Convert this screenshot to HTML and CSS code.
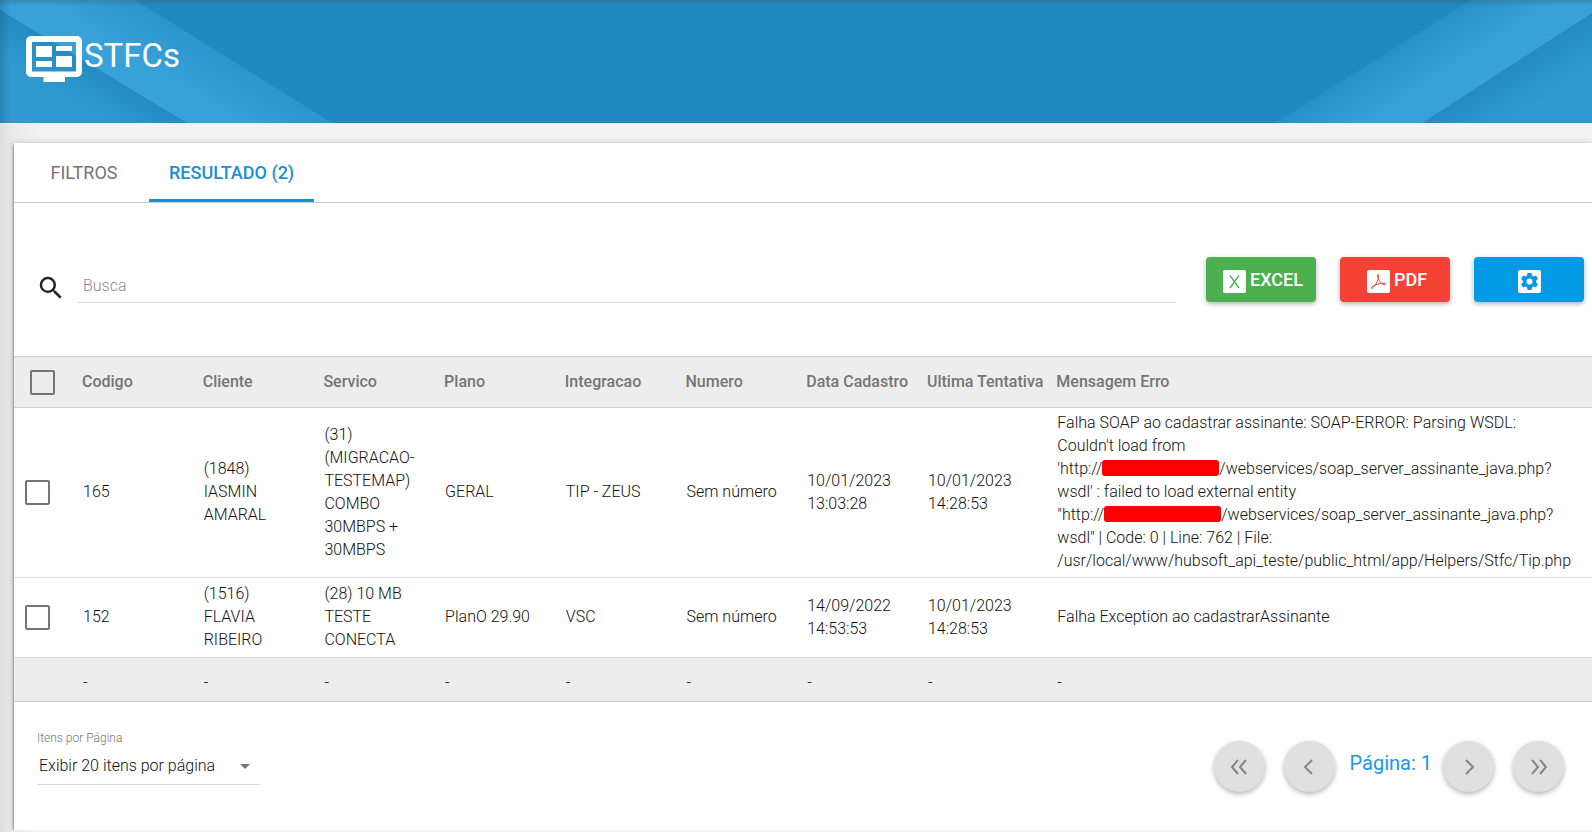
FILE: index.html
```html
<!DOCTYPE html>
<html lang="pt-BR">
<head>
  <meta charset="UTF-8" />
  <meta name="viewport" content="width=device-width, initial-scale=1.0"/>
  <title>STFCs</title>
  <link rel="stylesheet" href="styles.css">
</head>
<body>
  <header class="page-header">
    <svg class="stripes stripes-left" viewBox="0 0 340 123" aria-hidden="true">
      <defs>
        <linearGradient id="bandL" gradientUnits="userSpaceOnUse" x1="236" y1="62" x2="184" y2="145">
          <stop offset="0" stop-color="#2b94ca"/>
          <stop offset="0.5" stop-color="#38a1d7"/>
        </linearGradient>
        <linearGradient id="cornerL" gradientUnits="userSpaceOnUse" x1="93" y1="66" x2="63" y2="116">
          <stop offset="0" stop-color="#238bc1"/>
          <stop offset="0.7" stop-color="#309ad0"/>
        </linearGradient>
      </defs>
      <path fill="url(#bandL)" d="M0 0H135L332 123H0z"/>
      <path fill="url(#cornerL)" d="M0 10L187 123H0z"/>
    </svg>
    <svg class="stripes stripes-right" viewBox="0 0 340 123" aria-hidden="true">
      <defs>
        <linearGradient id="bandR" gradientUnits="userSpaceOnUse" x1="120" y1="62" x2="152" y2="112">
          <stop offset="0" stop-color="#2790c6"/>
          <stop offset="0.8" stop-color="#38a1d7"/>
        </linearGradient>
        <linearGradient id="cornerR" gradientUnits="userSpaceOnUse" x1="255" y1="68" x2="285" y2="115">
          <stop offset="0" stop-color="#238bc1"/>
          <stop offset="0.8" stop-color="#309ad0"/>
        </linearGradient>
      </defs>
      <path fill="url(#bandR)" d="M219 0H340V123H23z"/>
      <path fill="url(#cornerR)" d="M340 13V123H170z"/>
    </svg>
    <div class="brand">
      <svg class="brand-icon" viewBox="0 0 56 46" aria-hidden="true">
        <path fill="#fff" fill-rule="evenodd" d="M5 0H51a5 5 0 0 1 5 5V36a5 5 0 0 1-5 5H39V46H17.500V41H5a5 5 0 0 1-5-5V5a5 5 0 0 1 5-5zM6 6V35.500H50V6z"/>
        <path fill="#fff" d="M10 10H26V21H10zM30 10H46V15H30zM10 25H26V31H10zM30 20H46V31H30z"/>
      </svg>
      <h1>STFCs</h1>
    </div>
  </header>

  <main class="card">
    <nav class="tabs">
      <button class="tab" type="button">FILTROS</button>
      <button class="tab active" type="button">RESULTADO (2)</button>
    </nav>

    <div class="toolbar">
      <label class="search-label" for="busca" aria-label="Busca">
        <svg width="30" height="30" viewBox="0 0 24 24" aria-hidden="true">
          <path fill="#212121" d="M15.500 14h-.79l-.28-.27A6.471 6.471 0 0 0 16 9.500 6.500 6.500 0 1 0 9.500 16c1.610 0 3.090-.59 4.230-1.570l.27.280v.790l5 4.990L20.490 19l-4.990-5zm-6 0C7.010 14 5 11.990 5 9.500S7.010 5 9.500 5 14 7.010 14 9.500 11.990 14 9.500 14z"/>
        </svg>
      </label>
      <input class="search" type="text" id="busca" placeholder="Busca">
      <div class="actions">
        <button class="btn green" type="button">
          <svg width="23" height="23" viewBox="0 0 23 23" aria-hidden="true">
            <rect width="23" height="23" rx="2" fill="#fff"/>
            <path d="M7 5.500L16 18M16 5.500L7 18" stroke="#4caf50" stroke-width="1.300" fill="none"/>
          </svg>
          <span>EXCEL</span>
        </button>
        <button class="btn red" type="button">
          <svg width="23" height="23" viewBox="0 0 23 23" aria-hidden="true">
            <rect width="23" height="23" rx="2" fill="#fff"/>
            <path d="M10.500 5.500C10 3.800 12 3.800 11.700 5.800C11.500 10.500 7.500 17 5.500 18.200C4.500 18.700 3.700 18 4.800 17C7 14.800 13 12.800 17 13.200C19.500 13.500 19 15.200 17.200 14.700C14 13.800 11 10 10.500 5.500z" stroke="#f44336" stroke-width="1" fill="none"/>
          </svg>
          <span>PDF</span>
        </button>
        <button class="btn blue" type="button" aria-label="Configurações">
          <svg width="23" height="23" viewBox="0 0 23 23" aria-hidden="true">
            <rect width="23" height="23" rx="2" fill="#fff"/>
            <path fill="#039be5" fill-rule="evenodd" d="M9.500 3h4l.5 2.600 1.500.9 2.500-.9 2 3.400-2 1.700v1.700l2 1.700-2 3.400-2.500-.9-1.500.9-.5 2.500h-4L9 17.500l-1.500-.9-2.500.9-2-3.400 2-1.700v-1.700L3 9l2-3.400 2.500.9L9 5.600zM11.500 8.500a3 3 0 1 0 0 6 3 3 0 0 0 0-6z"/>
          </svg>
        </button>
      </div>
    </div>

    <table class="results">
      <colgroup>
        <col class="col-check">
        <col class="col-data" span="7">
        <col class="col-last-try">
        <col>
      </colgroup>
      <thead>
        <tr>
          <th class="check"><input type="checkbox" aria-label="Selecionar todos"></th>
          <th>Codigo</th>
          <th>Cliente</th>
          <th>Servico</th>
          <th>Plano</th>
          <th>Integracao</th>
          <th>Numero</th>
          <th>Data Cadastro</th>
          <th>Ultima Tentativa</th>
          <th>Mensagem Erro</th>
        </tr>
      </thead>
      <tbody>
        <tr>
          <td class="check"><input type="checkbox" aria-label="Selecionar 165"></td>
          <td>165</td>
          <td>(1848) IASMIN AMARAL</td>
          <td>(31) (MIGRACAO-TESTEMAP) COMBO 30MBPS + 30MBPS</td>
          <td>GERAL</td>
          <td>TIP - ZEUS</td>
          <td>Sem número</td>
          <td>10/01/2023 13:03:28</td>
          <td>10/01/2023 14:28:53</td>
          <td class="message">
            Falha SOAP ao cadastrar assinante: SOAP-ERROR: Parsing WSDL:<br>
            Couldn't load from<br>
            'http://<span class="redacted"></span>/webservices/soap_server_assinante_java.php?<br>
            wsdl' : failed to load external entity<br>
            "http://<span class="redacted"></span>/webservices/soap_server_assinante_java.php?<br>
            wsdl" | Code: 0 | Line: 762 | File:<br>
            /usr/local/www/hubsoft_api_teste/public_html/app/Helpers/Stfc/Tip.php
          </td>
        </tr>
        <tr>
          <td class="check"><input type="checkbox" aria-label="Selecionar 152"></td>
          <td>152</td>
          <td>(1516) FLAVIA RIBEIRO</td>
          <td>(28) 10 MB TESTE CONECTA</td>
          <td>PlanO 29.90</td>
          <td>VSC</td>
          <td>Sem número</td>
          <td>14/09/2022 14:53:53</td>
          <td>10/01/2023 14:28:53</td>
          <td class="message">Falha Exception ao cadastrarAssinante</td>
        </tr>
      </tbody>
      <tfoot>
        <tr>
          <td></td>
          <td>-</td>
          <td>-</td>
          <td>-</td>
          <td>-</td>
          <td>-</td>
          <td>-</td>
          <td>-</td>
          <td>-</td>
          <td>-</td>
        </tr>
      </tfoot>
    </table>

    <div class="footer">
      <div class="per-page">
        <label for="itens">Itens por Página</label>
        <div class="select-wrap">
          <select id="itens">
            <option>Exibir 20 itens por página</option>
          </select>
        </div>
      </div>
      <div class="pagination">
        <button class="page-btn" type="button" aria-label="Primeira página">
          <svg width="30" height="30" viewBox="0 0 30 30"><path d="M14 8L8 15L14 22M22 8L16 15L22 22"/></svg>
        </button>
        <button class="page-btn" type="button" aria-label="Página anterior">
          <svg width="30" height="30" viewBox="0 0 30 30"><path d="M18 8L11 15L18 22"/></svg>
        </button>
        <span class="page-label">Página: 1</span>
        <button class="page-btn" type="button" aria-label="Próxima página">
          <svg width="30" height="30" viewBox="0 0 30 30"><path d="M12 8L19 15L12 22"/></svg>
        </button>
        <button class="page-btn" type="button" aria-label="Última página">
          <svg width="30" height="30" viewBox="0 0 30 30"><path d="M8 8L14 15L8 22M16 8L22 15L16 22"/></svg>
        </button>
      </div>
    </div>
  </main>
</body>
</html>
```
FILE: styles.css
```css
* {
  box-sizing: border-box;
}
body {
  margin: 0;
  font-family: Roboto, "Liberation Sans", sans-serif;
  font-size: 16px;
  font-weight: 300;
  line-height: 23px;
  color: #111;
  background: linear-gradient(to right, #dfdfdf, #ebebeb 14px, #f3f3f3 40px);
  overflow-x: hidden;
}
button,
input,
select {
  font-family: inherit;
}

/* header */
.page-header {
  position: relative;
  height: 123px;
  padding: 36px 26px;
  background: #2089bf;
}
.page-header::after {
  content: "";
  position: absolute;
  inset: 0;
  background:
    linear-gradient(to bottom, rgba(60, 80, 100, 0.3), transparent 6px),
    linear-gradient(to right, rgba(20, 80, 120, 0.3), transparent 10px);
}
.stripes {
  position: absolute;
  top: 0;
  width: 340px;
  height: 123px;
}
.stripes-left {
  left: 0;
}
.stripes-right {
  right: 0;
}
.brand {
  position: relative;
  display: flex;
  gap: 2px;
}
.brand-icon {
  width: 56px;
  height: 46px;
}
h1 {
  margin: 0;
  color: #fff;
  font-size: 33px;
  font-weight: 400;
  line-height: 40px;
}

/* card */
.card {
  margin: 20px 0 0 14px;
  background: #fff;
  box-shadow: 0 2px 3px rgba(0, 0, 0, 0.6), 0 0 8px rgba(0, 0, 0, 0.15);
}
.tabs {
  display: flex;
  height: 60px;
  padding-left: 5px;
  border-bottom: 1px solid #ccc;
}
.tab {
  min-width: 130px;
  padding: 2px 20px 0;
  border: 0;
  border-bottom: 3px solid transparent;
  background: none;
  color: #757575;
  font-size: 18px;
  font-weight: 400;
}
.tab.active {
  border-bottom-color: #1b8fd6;
  color: #1b8fd6;
  font-weight: 500;
}

/* search and export buttons */
.toolbar {
  display: flex;
  align-items: center;
  height: 153px;
  padding: 0 8px 0 22px;
}
.search-label {
  display: flex;
  padding-top: 16px;
  margin-right: 12px;
}
.search {
  flex: 1;
  height: 40px;
  margin-top: 6px;
  padding: 6px 5px 0;
  border: 0;
  border-bottom: 1px solid #d8d8d8;
  background: none;
  font-size: 16px;
  font-weight: 300;
}
.search::placeholder {
  color: #8a8a8a;
}
.actions {
  display: flex;
  gap: 24px;
  margin-left: 30px;
}
.btn {
  display: flex;
  align-items: center;
  justify-content: center;
  gap: 4px;
  width: 110px;
  height: 45px;
  padding: 0;
  border: 0;
  border-radius: 4px;
  color: #fff;
  font-size: 18px;
  font-weight: 500;
  box-shadow: 0 2px 5px rgba(0, 0, 0, 0.3);
}
.btn svg {
  margin-top: 4px;
}
.green,
.red {
  padding-left: 4px;
}
.green {
  background: #4caf50;
}
.red {
  background: #f44336;
}
.blue {
  background: #039be5;
}

/* table */
.results {
  width: 100%;
  table-layout: fixed;
  border-collapse: collapse;
}
.col-check {
  width: 62px;
}
.col-data {
  width: 7.65%;
}
.col-last-try {
  width: 8.2%;
}
th,
td {
  padding: 3px 16px 5px 7px;
  text-align: left;
  vertical-align: middle;
}
th {
  height: 51px;
  padding-left: 6px;
  border: 1px solid #d0d0d0;
  border-width: 1px 0;
  background: #ededed;
  color: #757575;
  font-weight: 500;
  white-space: nowrap;
}
td {
  height: 80px;
  border-bottom: 1px solid #dcdcdc;
}
tfoot td {
  height: 44px;
  padding-top: 7px;
  padding-bottom: 1px;
  background: #ededed;
  border-bottom-color: #ccc;
}
.check {
  padding: 0 0 0 11px;
}
th.check {
  padding-left: 16px;
}
.check input {
  display: block;
  appearance: none;
  width: 25px;
  height: 25px;
  margin: 0;
  border: 2px solid #757575;
  border-radius: 2px;
}
.message {
  white-space: nowrap;
}
.redacted {
  display: inline-block;
  width: 117px;
  height: 16px;
  border-radius: 3px;
  background: #f00;
  vertical-align: -2px;
}

/* footer */
.footer {
  display: flex;
  align-items: flex-start;
  justify-content: space-between;
  height: 128px;
  padding: 25px 28px 0 23px;
}
.per-page label {
  display: block;
  color: #757575;
  font-size: 12px;
}
.select-wrap {
  position: relative;
  width: 223px;
}
.select-wrap::after {
  content: "";
  position: absolute;
  top: 14px;
  right: 10px;
  border: 5px solid transparent;
  border-top-color: #757575;
  border-bottom: 0;
  pointer-events: none;
}
select {
  appearance: none;
  width: 100%;
  height: 35px;
  padding: 0 24px 4px 2px;
  border: 0;
  border-bottom: 1px solid #d8d8d8;
  background: none;
  color: #111;
  font-size: 16px;
  font-weight: 300;
}
.pagination {
  display: flex;
  gap: 19px;
  padding-top: 14px;
}
.page-btn {
  display: flex;
  align-items: center;
  justify-content: center;
  width: 51px;
  height: 51px;
  padding: 0;
  border: 0;
  border-radius: 50%;
  background: #e0e0e0;
  box-shadow: 0 2px 5px rgba(0, 0, 0, 0.3);
}
.page-btn path {
  fill: none;
  stroke: #858585;
  stroke-width: 2;
}
.page-label {
  margin: 0 -8px 0 -4px;
  color: #2196e8;
  font-size: 20px;
  font-weight: 400;
  line-height: 44px;
}
```
